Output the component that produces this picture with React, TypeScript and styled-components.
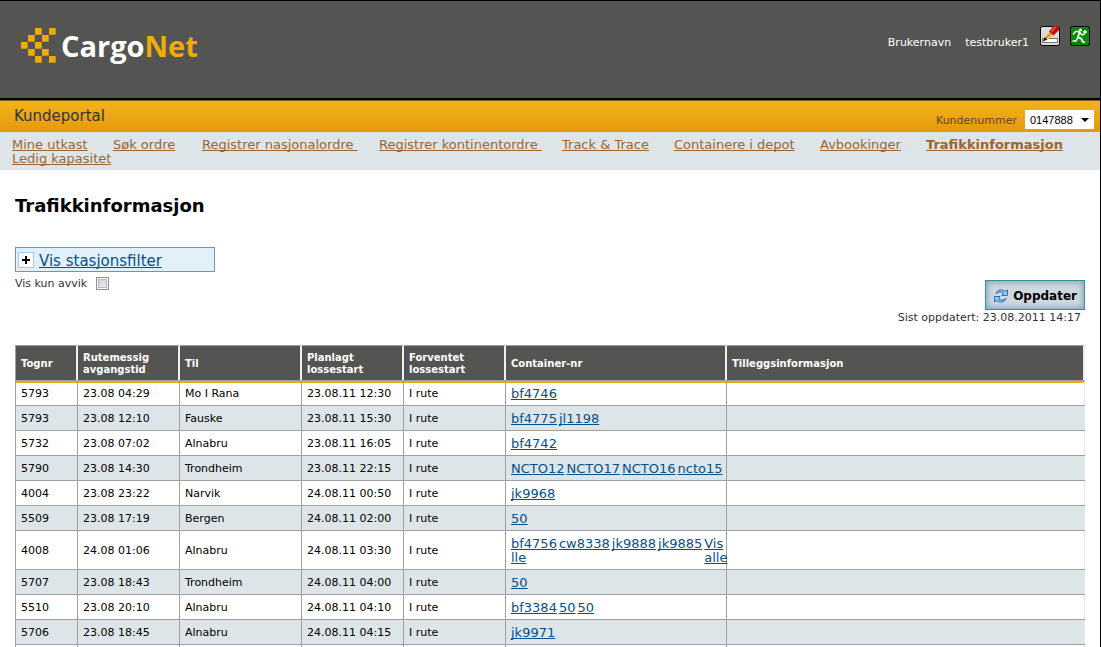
import React from "react";
import styled, { createGlobalStyle } from "styled-components";

const Global = createGlobalStyle`
  * { box-sizing: border-box; }
  html { overflow: hidden; }
  body { margin: 0; background: #fff; font-family: Verdana, "DejaVu Sans", sans-serif; font-size: 11px; color: #333; }
`;

const Page = styled.div`
  min-height: 100vh;
  border-top: 1px solid #000;
  border-right: 1px solid #000;
`;

const Header = styled.header`
  display: flex;
  align-items: flex-start;
  justify-content: space-between;
  height: 99px;
  padding: 24px 10px 0 21px;
  background: #545552;
  border-bottom: 2px solid #000;
`;

const Logo = styled.div`
  display: flex;
  align-items: center;
  gap: 5px;
  margin-top: 3px;
  color: #fff;
  font: bold 29px/34px "Open Sans", sans-serif;
  span span { color: #f0ab0b; }
`;

const UserBar = styled.div`
  display: flex;
  color: #fff;
  line-height: 14px;
  span { margin-top: 11px; margin-right: 14px; }
  span + span { margin-right: 11px; }
`;

const IconButton = styled.button`
  display: block;
  width: 20px;
  height: 20px;
  margin-top: 1px;
  padding: 0;
  border: 0;
  background: none;
  & + & { margin-left: 10px; }
  svg { display: block; }
`;

const PortalBar = styled.div`
  display: flex;
  justify-content: space-between;
  align-items: center;
  height: 32px;
  padding: 0 6px 0 14px;
  border-top: 1px solid #7a5c1c;
  background: linear-gradient(#f2b41a, #e6980b);
`;

const PortalName = styled.span`
  padding-bottom: 2px;
  font-size: 15px;
  line-height: 28px;
`;

const Customer = styled.div`
  display: flex;
  align-items: center;
  gap: 8px;
  padding-top: 6px;
  color: #5b4322;
  label { padding-top: 2px; }
`;

const Select = styled.select`
  appearance: none;
  width: 69px;
  height: 19px;
  padding: 0 0 0 5px;
  border: 0;
  color: #000;
  font: 11px "Liberation Sans", Arial, sans-serif;
  background: #fff;
`;

const SelectWrap = styled.div`
  position: relative;
  display: flex;
  svg { position: absolute; right: 5px; top: 8px; pointer-events: none; }
`;

const Nav = styled.nav`
  display: grid;
  grid-template-columns: 101px 89px 177px 183px 112px 146px 106px auto;
  align-content: start;
  justify-items: start;
  height: 38px;
  padding: 6px 12px 0;
  background: #dee5e8;
  font-size: 13px;
  line-height: 14px;
`;

const NavLink = styled.a<{ $active?: boolean }>`
  height: 14px;
  overflow: hidden;
  color: #996633;
  font-weight: ${(p) => (p.$active ? "bold" : "normal")};
  text-decoration-skip-ink: none;
  white-space: pre;
`;

const Main = styled.main`
  padding: 25px 15px 0;
`;

const Title = styled.h1`
  margin: 0;
  font-size: 18px;
  line-height: 22px;
  color: #000;
`;

const Filter = styled.div`
  display: flex;
  align-items: center;
  gap: 5px;
  width: 200px;
  height: 25px;
  margin-top: 30px;
  padding-left: 2px;
  border: 1px solid #6f95b0;
  background: #e2f0fa;
  font-size: 15px;
  a { padding-top: 2px; }
`;

const Expand = styled.button`
  display: flex;
  width: 16px;
  height: 16px;
  padding: 0;
  align-items: center;
  justify-content: center;
  border: 1px solid #a3cdeb;
  background: #fff;
`;

const Link = styled.a`
  color: #045089;
  text-decoration-skip-ink: none;
`;

const Deviation = styled.label`
  display: flex;
  align-items: center;
  gap: 9px;
  width: max-content;
  height: 14px;
  margin-top: 4px;
`;

const Checkbox = styled.input`
  appearance: none;
  width: 13px;
  height: 13px;
  margin: 0;
  border: 1px solid #8e8f8f;
  background: linear-gradient(135deg, #c5c8ce, #f4f4f4);
  box-shadow: inset 0 0 0 1px #f4f4f4, inset 0 0 0 2px #b8bcc2;
`;

const Update = styled.div`
  display: flex;
  flex-direction: column;
  align-items: flex-end;
  margin-top: -10px;
  p { margin: 0; padding: 1px 4px 0; line-height: 14px; }
`;

const UpdateButton = styled.button`
  display: flex;
  align-items: center;
  justify-content: space-between;
  width: 100px;
  height: 30px;
  padding: 1px 7px 0;
  border: 1px solid #3d8c99;
  background: #ced8e0;
  box-shadow: inset 0 0 6px 1px #78a4ae;
  color: #000;
  font: bold 12px Verdana, "DejaVu Sans", sans-serif;
  svg { flex: none; }
`;

const Table = styled.table`
  width: 100%;
  margin-top: 20px;
  table-layout: fixed;
  border-collapse: collapse;
  font-size: 11px;
  color: #000;
`;

const Th = styled.th`
  height: 35px;
  padding: 2px 5px 0;
  border: 1px solid #a0a0a0;
  border-left-color: #f0f0f0;
  border-right-color: #f0f0f0;
  background: #545552;
  box-shadow: inset -1px 0 #f0f0f0;
  color: #fff;
  font-size: 10px;
  line-height: 12px;
  text-align: left;
  &:first-child { border-left-color: #a0a0a0; }
`;

const Td = styled.td`
  height: 25px;
  padding: 6px 5px 4px;
  border: 1px solid #a0a0a0;
  line-height: 12px;
  &:last-child { border-right-color: #e8e8e8; }
`;

const Row = styled.tr`
  &:nth-child(even) { background: #dee5e8; }
  &:first-child ${Td} { box-shadow: inset 0 2px #f0ab0b; }
`;

const Containers = styled.div`
  display: flex;
  gap: 2px;
  font-size: 13px;
  line-height: 14px;
`;

const navItems = ["Mine utkast", "Søk ordre", "Registrer nasjonalordre ", "Registrer kontinentordre ", "Track & Trace", "Containere i depot", "Avbookinger", "Trafikkinformasjon", "Ledig kapasitet"];

const rows: [string, string, string, string, string[]][] = [
  ["5793", "23.08 04:29", "Mo I Rana", "23.08.11 12:30", ["bf4746"]],
  ["5793", "23.08 12:10", "Fauske", "23.08.11 15:30", ["bf4775", "jl1198"]],
  ["5732", "23.08 07:02", "Alnabru", "23.08.11 16:05", ["bf4742"]],
  ["5790", "23.08 14:30", "Trondheim", "23.08.11 22:15", ["NCTO12", "NCTO17", "NCTO16", "ncto15"]],
  ["4004", "23.08 23:22", "Narvik", "24.08.11 00:50", ["jk9968"]],
  ["5509", "23.08 17:19", "Bergen", "24.08.11 02:00", ["50"]],
  ["4008", "24.08 01:06", "Alnabru", "24.08.11 03:30", ["bf4756 lle", "cw8338", "jk9888", "jk9885", "Vis alle"]],
  ["5707", "23.08 18:43", "Trondheim", "24.08.11 04:00", ["50"]],
  ["5510", "23.08 20:10", "Alnabru", "24.08.11 04:10", ["bf3384", "50", "50"]],
  ["5706", "23.08 18:45", "Alnabru", "24.08.11 04:15", ["jk9971"]],
  ["", "", "", "", []],
];

const cells = [[2, 0], [4, 0], [1, 1], [3, 1], [0, 2], [2, 2], [1, 3], [3, 3], [2, 4], [4, 4]];

export default function App() {
  return (
    <Page>
      <Global />
      <Header>
        <Logo>
          <svg width="35" height="35" viewBox="0 0 35 35" fill="#f0ab0b">
            {cells.map(([x, y]) => <rect key={`${x}-${y}`} x={x * 7} y={y * 7} width="6.7" height="6.7" />)}
          </svg>
          <span>Cargo<span>Net</span></span>
        </Logo>
        <UserBar>
          <span>Brukernavn</span>
          <span>testbruker1</span>
          <IconButton aria-label="Rediger">
            <svg width="20" height="20" viewBox="0 0 20 20">
              <rect x=".5" y=".5" width="19" height="19" rx="2" fill="#dcdcdc" stroke="#000" />
              <rect x="2.5" y="12.5" width="15" height="4" fill="#fff" stroke="#777" />
              <path d="M3 15.5l1.5-4.5 3 2.5z" fill="#111" />
              <path d="M4.500 11L9 5.500l4.500 4L7.500 13.500z" fill="#f8c060" />
              <path d="M6 12l5-4.500" stroke="#a85a10" />
              <path d="M9 5.500L13.500 0H19v4l-5.500 5.500z" fill="#c80c0c" />
              <path d="M11.500 5.500L15.500 1" stroke="#ff6a5a" strokeWidth="1.300" />
            </svg>
          </IconButton>
          <IconButton aria-label="Logg ut">
            <svg width="20" height="20" viewBox="0 0 20 20">
              <rect x=".5" y=".5" width="19" height="19" rx="2" fill="#078a07" stroke="#000" />
              <g fill="none" stroke="#fff" strokeWidth="1.400">
                <path d="M3 8.500l2.500-3H9l3 3.500 2.500-1" />
                <path d="M9.500 6L8 11l3.500 2 1 2.500 2.500 1" strokeWidth="1.800" />
                <path d="M8 11l-2 4H2.500M15 4v4M13 6h4" />
              </g>
              <circle cx="10.500" cy="4" r="1.500" fill="#fff" />
            </svg>
          </IconButton>
        </UserBar>
      </Header>
      <PortalBar>
        <PortalName>Kundeportal</PortalName>
        <Customer>
          <label htmlFor="customer">Kundenummer</label>
          <SelectWrap>
            <Select id="customer"><option>0147888</option></Select>
            <svg width="8" height="4" viewBox="0 0 8 4"><path d="M0 0h8L4 4z" /></svg>
          </SelectWrap>
        </Customer>
      </PortalBar>
      <Nav>
        {navItems.map((t) => (
          <NavLink key={t} href="#" $active={t === "Trafikkinformasjon"}>{t}</NavLink>
        ))}
      </Nav>
      <Main>
        <Title>Trafikkinformasjon</Title>
        <Filter>
          <Expand aria-label="Utvid">
            <svg width="8" height="8" viewBox="0 0 8 8"><path d="M3 0h2v3h3v2H5v3H3V5H0V3h3z" /></svg>
          </Expand>
          <Link href="#">Vis stasjonsfilter</Link>
        </Filter>
        <Deviation>Vis kun avvik <Checkbox type="checkbox" /></Deviation>
        <Update>
          <UpdateButton>
            <svg width="16" height="16" viewBox="0 0 16 16" fill="#8fd0fa" stroke="#1c62b8" strokeWidth=".9" strokeLinejoin="round">
              <path d="M3 5.500C4.500 1.500 9.500.8 12 3.500L14.500 2v5.500H9L10.500 5C8.500 3.300 5.500 3.500 3 5.500z" />
              <path d="M13 10.500c-1.500 4-6.500 4.700-9 2L1.500 14V8.500H7L5.500 11c2 1.700 5 1.500 7.500-.5z" />
            </svg>
            Oppdater
          </UpdateButton>
          <p>Sist oppdatert: 23.08.2011 14:17</p>
        </Update>
        <Table>
          <colgroup>
            <col width="62" /><col width="102" /><col width="122" /><col width="102" /><col width="102" /><col width="221" /><col />
          </colgroup>
          <thead>
            <tr>
              <Th>Tognr</Th>
              <Th>Rutemessig avgangstid</Th>
              <Th>Til</Th>
              <Th>Planlagt lossestart</Th>
              <Th>Forventet lossestart</Th>
              <Th>Container-nr</Th>
              <Th>Tilleggsinformasjon</Th>
            </tr>
          </thead>
          <tbody>
            {rows.map(([no, dep, to, plan, links], i) => (
              <Row key={i}>
                <Td>{no}</Td>
                <Td>{dep}</Td>
                <Td>{to}</Td>
                <Td>{plan}</Td>
                <Td>{no && "I rute"}</Td>
                <Td><Containers>{links.map((l, j) => <Link key={j} href="#">{l}</Link>)}</Containers></Td>
                <Td />
              </Row>
            ))}
          </tbody>
        </Table>
      </Main>
    </Page>
  );
}
